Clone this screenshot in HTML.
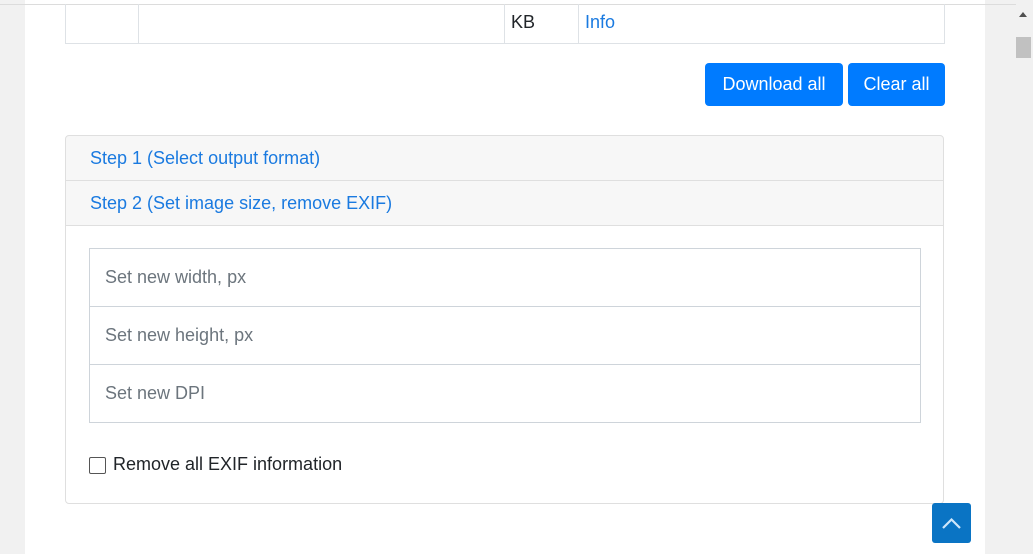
<!DOCTYPE html><html><head><style>
body{margin:0;width:1033px;height:554px;overflow:hidden;background:#f1f1f1;font-family:"Liberation Sans",sans-serif;position:relative}
.page{position:absolute;left:25px;top:0;width:960px;height:554px;background:#fff}
.topl{position:absolute;left:0;top:4px;width:1016px;height:1px;background:#dcdcdc}
.sb{position:absolute;left:1016px;top:5px;width:17px;height:549px;background:#f1f1f1}
.thumb{position:absolute;left:1016px;top:37px;width:15px;height:21px;background:#c1c1c1}
.cell{position:absolute;top:4px;height:40px;border:1px solid #dee2e6;border-top:none;box-sizing:border-box;font-size:18px;line-height:37px;padding-left:7px;color:#212529}
.btn{position:absolute;top:63px;height:43px;background:#007bff;color:#fff;border-radius:4px;font-size:18px;line-height:43px;text-align:center}
.acc{position:absolute;left:65px;width:879px;box-sizing:border-box;border:1px solid #dfdfdf;background:#f7f7f7;color:#1a7ae0;font-size:18px;padding-left:24px}
.inp{position:absolute;left:89px;width:832px;box-sizing:border-box;border:1px solid #ced4da;font-size:18px;color:#6c757d;padding-left:15px}
</style></head><body>
<div class="page"></div>
<div class="topl"></div>
<div class="cell" style="left:65px;width:74px"></div>
<div class="cell" style="left:138px;width:367px;border-left:none"></div>
<div class="cell" style="left:504px;width:75px;border-left:none">KB</div>
<div class="cell" style="left:578px;width:367px;border-left:none;color:#1a7ae0">Info</div>
<div class="btn" style="left:705px;width:138px">Download all</div>
<div class="btn" style="left:848px;width:97px">Clear all</div>
<div class="acc" style="top:135px;height:46px;line-height:44px;border-radius:4px 4px 0 0">Step 1 (Select output format)</div>
<div class="acc" style="top:180px;height:46px;line-height:44px">Step 2 (Set image size, remove EXIF)</div>
<div class="acc" style="top:225px;height:279px;background:#fff;border-radius:0 0 4px 4px"></div>
<div class="inp" style="top:248px;height:59px;line-height:57px">Set new width, px</div>
<div class="inp" style="top:306px;height:59px;line-height:57px">Set new height, px</div>
<div class="inp" style="top:364px;height:59px;line-height:57px">Set new DPI</div>
<div style="position:absolute;left:89px;top:457px;width:15px;height:15px;border:1px solid #555;border-radius:2px"></div>
<div style="position:absolute;left:113px;top:454px;font-size:18px;color:#212529">Remove all EXIF information</div>
<div style="position:absolute;left:932px;top:503px;width:39px;height:40px;background:#0a74c4;border-radius:3px"><svg width="39" height="40"><path d="M11 25 L19.5 16.5 L28 25" stroke="#cfe6fa" stroke-width="2.2" fill="none"/></svg></div>
<div class="sb"></div><div class="thumb"></div>
<div style="position:absolute;left:1019px;top:12px;width:0;height:0;border-left:4px solid transparent;border-right:4px solid transparent;border-bottom:5px solid #505050"></div>
</body></html>
